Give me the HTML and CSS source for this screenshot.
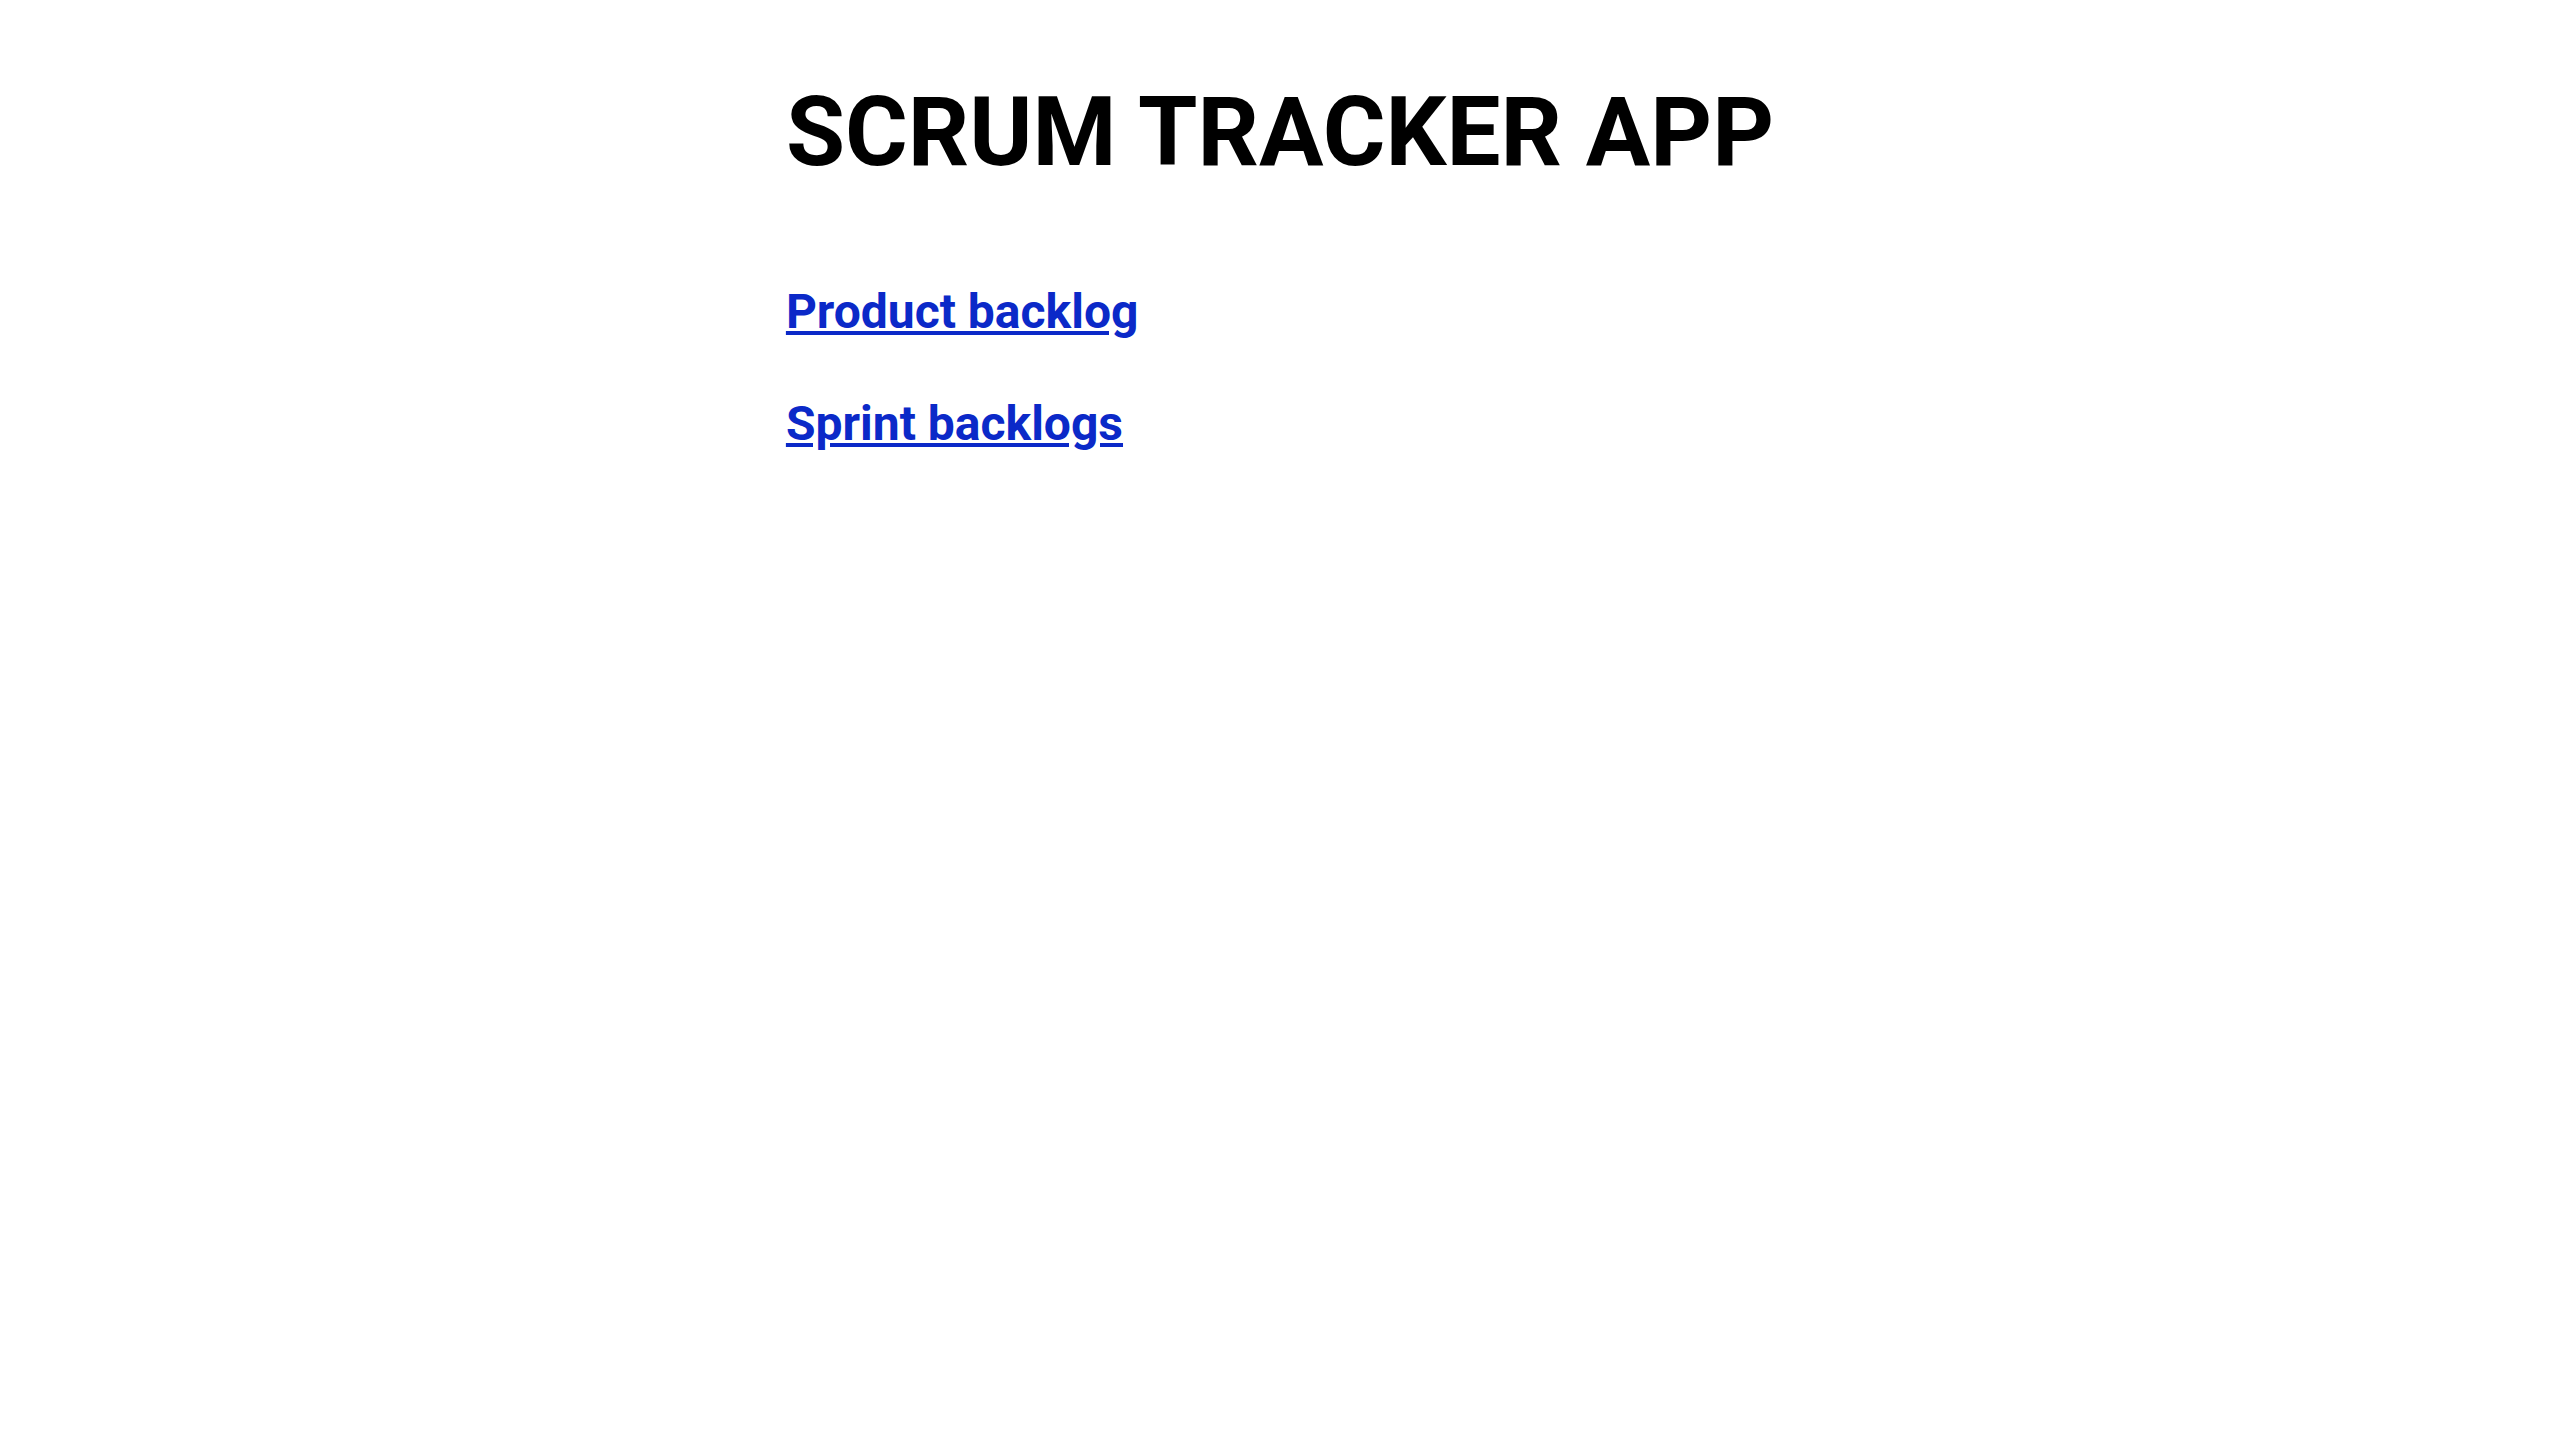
FILE: index.html
```html
<!DOCTYPE html>
<html>
<head>
<meta charset="utf-8">
<link rel="stylesheet" href="styles.css">
<title>Scrum Tracker App</title>
</head>
<body>
<main class="app">
  <h1 class="title">SCRUM TRACKER APP</h1>
  <nav class="nav">
    <a class="nav-link" href="#">Product backlog</a>
    <a class="nav-link" href="#">Sprint backlogs</a>
  </nav>
</main>
</body>
</html>
```
FILE: styles.css
```css
html, body {
  margin: 0;
  padding: 0;
  background: #ffffff;
}
body {
  font-family: Roboto, "Noto Sans", sans-serif;
  color: #000;
}
.app {
  width: fit-content;
  margin: 0 auto;
  padding-top: 75px;
}
.title {
  margin: 0;
  font-size: 96px;
  font-weight: 700;
  line-height: 1.2;
  white-space: nowrap;
}
.nav {
  display: flex;
  flex-direction: column;
  align-items: flex-start;
  gap: 54px;
  margin-top: 93px;
}
.nav-link {
  font-size: 48px;
  font-weight: 700;
  line-height: 1.2;
  color: #0b29c8;
  text-decoration: underline;
}
```
